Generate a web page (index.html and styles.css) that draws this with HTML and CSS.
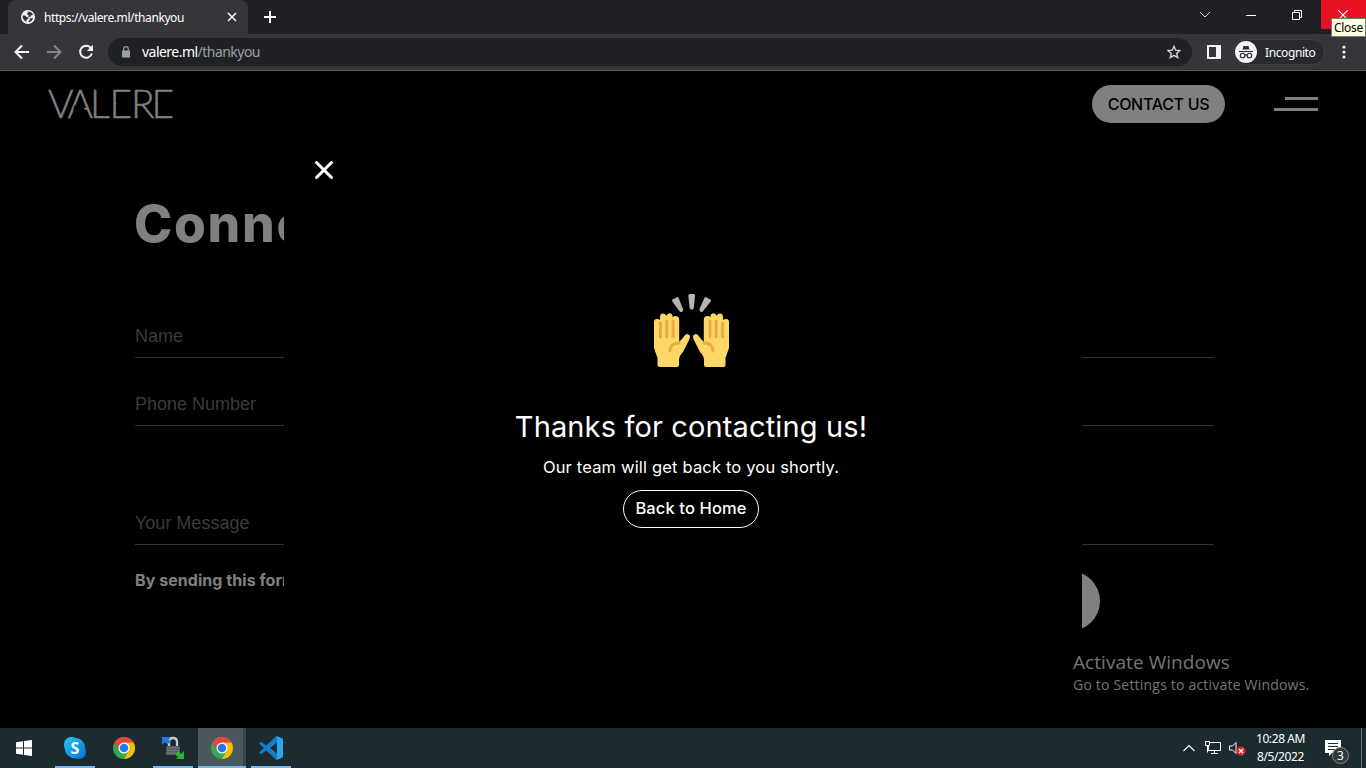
FILE: index.html
```html
<!DOCTYPE html>
<html lang="en">
<head>
<meta charset="utf-8">
<title>https://valere.ml/thankyou</title>
<link rel="stylesheet" href="styles.css">
</head>
<body>
<div class="screen">
  <header class="tabstrip">
    <div class="tab">
      <svg class="globe" width="14" height="14" viewBox="0 0 14 14"><circle cx="7" cy="7" r="7" fill="#f1f3f4"/><path d="M1.500 5.500h2.700l1.300 1.400h1.700v1.600L5.500 10v1.800C3.200 11.200 1.300 8.700 1.500 5.500zM7.200 1.500c2 0 4 1.200 4.900 3.200L10 5.400l-.9 1.800-1.800-.4.300-1.500-1.700-1zM8.300 8.400l3.800-.4c-.5 2.400-2 3.800-4.300 4.300v-1.800l1.500-.9z" fill="#35363a"/></svg>
      <span class="tab-title">https://valere.ml/thankyou</span>
      <svg width="10" height="10" viewBox="0 0 10 10"><path d="M1 1l8 8M9 1l-8 8" stroke="#f1f3f4" stroke-width="1.7"/></svg>
    </div>
    <svg class="newtab" width="12" height="12" viewBox="0 0 12 12"><path d="M6 0v12M0 6h12" stroke="#fff" stroke-width="2"/></svg>
    <div class="window-controls">
      <span class="ctl"><svg width="12" height="8" viewBox="0 0 12 8"><path d="M1 1l5 5 5-5" fill="none" stroke="#dcdcdc"/></svg></span>
      <span class="ctl"><svg width="10" height="10" viewBox="0 0 10 10"><path d="M0 5.500h10" stroke="#fff"/></svg></span>
      <span class="ctl"><svg width="10" height="10" viewBox="0 0 10 10"><path d="M.5 2.500h7v7h-7zM2.500 2.500v-2h7v7h-2" fill="none" stroke="#fff"/></svg></span>
      <span class="ctl close"><svg width="10" height="10" viewBox="0 0 10 10"><path d="M0 0l10 10M10 0L0 10" stroke="#fff" stroke-width="1.100"/></svg><span class="tooltip">Close</span></span>
    </div>
  </header>

  <div class="toolbar">
    <svg class="nav" width="16" height="16" viewBox="0 0 16 16"><path d="M15 8H2M8 1.500L1.500 8 8 14.500" fill="none" stroke="#f1f3f4" stroke-width="2"/></svg>
    <svg class="nav" width="16" height="16" viewBox="0 0 16 16"><path d="M1 8h13M8 1.500L14.500 8 8 14.500" fill="none" stroke="#85878a" stroke-width="2"/></svg>
    <svg class="nav" width="16" height="16" viewBox="0 0 16 16"><path d="M13 4.200A6 6 0 1 0 13.900 9.500" fill="none" stroke="#f1f3f4" stroke-width="2"/><path d="M15 .8v6.200H8.800z" fill="#f1f3f4"/></svg>
    <div class="omnibox">
      <svg width="10" height="12" viewBox="0 0 10 12"><path d="M1 4.500h8v7H1z" fill="#9aa0a6"/><path d="M2.700 5V3a2.300 2.300 0 0 1 4.600 0v2" fill="none" stroke="#9aa0a6" stroke-width="1.200"/></svg>
      <span class="url">valere.ml<span class="path">/thankyou</span></span>
      <svg class="star" width="14" height="14" viewBox="0 0 14 14"><path d="M7 1.300l1.700 3.900 4.200.4-3.200 2.800 1 4.200L7 10.400l-3.700 2.200 1-4.200L1.100 5.600l4.200-.4z" fill="none" stroke="#d0d2d5" stroke-width="1.400"/></svg>
    </div>
    <svg class="panel" width="14" height="14" viewBox="0 0 14 14"><path d="M0 0h14v14H0zM2 2v10h7V2z" fill="#f1f3f4" fill-rule="evenodd"/></svg>
    <div class="profile">
      <svg width="22" height="22" viewBox="0 0 22 22"><circle cx="11" cy="11" r="11" fill="#f1f3f4"/><path d="M7.500 8.500L8.600 4.700l2.400.6 2.400-.6 1.100 3.800zM4 10h14v1H4z" fill="#292a2d"/><g fill="none" stroke="#292a2d" stroke-width="1.100"><circle cx="7.600" cy="14.500" r="2.300"/><circle cx="14.400" cy="14.500" r="2.300"/><path d="M9.900 14.300q1.100-.8 2.200 0"/></g></svg>
      <span class="profile-name">Incognito</span>
    </div>
    <svg class="dots" width="4" height="14" viewBox="0 0 4 14"><g fill="#f1f3f4"><circle cx="2" cy="2" r="1.600"/><circle cx="2" cy="7" r="1.600"/><circle cx="2" cy="12" r="1.600"/></g></svg>
  </div>

  <main class="page">
    <div class="site-header">
      <svg class="logo" width="134" height="40" viewBox="0 0 134 40" role="img" aria-label="VALERE">
        <text class="logo-text" y="30" x="0 19.500 42 61.500 83 103.500">VALERE</text>
        <path d="M26.500 17.500h9.300l.7 4.400H25.200zM68.200 13h14.500v5H68.200zM110.200 13h14.500v5h-14.500z" fill="#000"/>
      </svg>
      <div class="header-actions">
        <a class="contact">CONTACT US</a>
        <span class="menu"><span class="bar short"></span><span class="bar"></span></span>
      </div>
    </div>
    <form class="form">
      <h1 class="title">Connect</h1>
      <div class="field name">Name</div>
      <div class="field phone">Phone Number</div>
      <div class="field message">Your Message</div>
      <div class="consent">By sending this form</div>
      <div class="send"></div>
    </form>
    <section class="modal">
      <svg class="modal-close" width="20" height="20" viewBox="0 0 20 20"><path d="M2.500 2.500l15 15M17.500 2.500l-15 15" stroke="#fff" stroke-width="3" stroke-linecap="round"/></svg>
      <svg class="hands" width="78" height="76" viewBox="0 0 78 76">
        <g fill="#b1b4b5"><path d="M19.500 5.500l4.500-2.300q1-.4 1.500.5l4.700 11.500q.4 2-1.400 2.700-1.600.6-2.500-.8l-7-9.700q-.7-1.200.2-1.900zM35.300 1.500q0-1.500 1.500-1.500h4q1.400 0 1.300 1.500L40.800 14q-.3 1.500-2 1.500T36.600 14zM57.500 5.500L53 3.200q-1-.4-1.500.5L46.500 15q-.5 2 1.200 2.800 1.500.7 2.500-.7l7.500-9.700q.7-1.200-.2-1.900z"/></g>
        <g id="hand"><path d="M1 28q0-3 2.700-3t3.300 1v-3.500q.3-3 3-3 2.300 0 3.300 2.300Q14.500 19.300 16.500 19.300q3 0 3.200 4 .8-1.300 2.800-1.300 3.500 0 3.700 3.700V48l4-4.500q3-4.700 5.300-3 2.500 1.200.8 5L30 58q-4 4-4 8V71q0 2-2 2H6.500q-2 0-2-2v-7L1 54z" fill="#ffd767"/><path d="M7.400 29v14M13.800 27v16M20 27v16" stroke="#e6aa47" stroke-width="3" stroke-linecap="round"/><path d="M17 57q0-8 9-8" stroke="#e6aa47" stroke-width="3" fill="none" stroke-linecap="round"/></g>
        <use href="#hand" transform="translate(77 0) scale(-1 1)"/>
      </svg>
      <h2 class="thanks">Thanks for contacting us!</h2>
      <p class="note">Our team will get back to you shortly.</p>
      <a class="home">Back to Home</a>
    </section>
    <aside class="watermark"><div class="activate">Activate Windows</div><div class="settings">Go to Settings to activate Windows.</div></aside>
  </main>

  <footer class="taskbar">
    <span class="task start"><svg width="16" height="16" viewBox="0 0 16 16"><path d="M0 2.300l7-1v6.200H0zM8 1.100L16 0v7.500H8zM0 8.500h7v6.200l-7-1zM8 8.500h8V16l-8-1.100z" fill="#fff"/></svg></span>
    <span class="task running skype"><svg width="22" height="22" viewBox="0 0 22 22"><defs><linearGradient id="sk" x2="1" y2="1"><stop stop-color="#25c1f2"/><stop offset="1" stop-color="#0878d4"/></linearGradient></defs><rect width="15" height="15" rx="7" fill="#28b5ea"/><rect x="8" y="8" width="14" height="14" rx="6.500" fill="#0878d4"/><circle cx="11" cy="11" r="10.300" fill="url(#sk)"/><text class="skype-s" x="11" y="16.500">S</text></svg></span>
    <span class="task chrome"><svg width="22" height="22" viewBox="0 0 22 22"><g id="chrome"><circle cx="11" cy="11" r="11" fill="#34a853"/><path d="M11 11L1.500 5.500A11 11 0 0 1 20.500 5.500z" fill="#ea4335"/><path d="M11 5.500h9.500A11 11 0 0 1 11 22l4.800-8.200z" fill="#fbbc05"/><path d="M1.500 5.500l4.800 8.300L11 5.500z" fill="#ea4335"/><circle cx="11" cy="11" r="5.500" fill="#fff"/><circle cx="11" cy="11" r="4.300" fill="#2679e8"/></g></svg></span>
    <span class="task running scp"><svg width="24" height="24" viewBox="0 0 24 24"><path d="M8 11V6q0-4 4-4t4 4v5" fill="none" stroke="#c8cacc" stroke-width="2.300"/><rect x="5" y="10" width="14" height="9" rx="1" fill="#555a5e"/><path d="M6 12h12M6 14.500h12M6 17h12" stroke="#85898c" stroke-width=".7"/><path d="M1 1h8L7.500 3 9.500 5.500 6.500 8.500 4 6 1 9z" fill="#2377e8"/><path d="M23 23h-8l2-2-3-3 3-3 3 3 3-3z" fill="#23b532"/></svg></span>
    <span class="task running active"><svg width="22" height="22" viewBox="0 0 22 22"><use href="#chrome"/></svg></span>
    <span class="task running code"><svg width="24" height="24" viewBox="0 0 24 24"><path d="M17.500 0L24 3v18l-6.500 3L7 14.500 2.500 18 0 16.500 5 12 0 7.500 2.500 6 7 9.500zM18 6.500L11 12l7 5.500z" fill="#147dc5" fill-rule="evenodd"/><path d="M17.500 0L24 3v18l-6.500 3q.5-.3.5-1.200V1.200q0-.9-.5-1.200z" fill="#2ba5ed"/></svg></span>
    <div class="tray">
      <svg class="caret" width="12" height="8" viewBox="0 0 12 8"><path d="M.5 7L6 1.500 11.500 7" fill="none" stroke="#fff" stroke-width="1.100"/></svg>
      <svg class="net" width="17" height="14" viewBox="0 0 17 14"><path d="M5 1.500h10.500v8H3.500V5M9.500 9.500v3M6 12.500h7M.5.500h4v4h-4zM2.500 4.500v7" fill="none" stroke="#fff"/></svg>
      <svg class="sound" width="17" height="16" viewBox="0 0 17 16"><path d="M.5 5h3L7 1.500v11L3.500 9h-3z" fill="none" stroke="#fff"/><circle cx="12" cy="10" r="4.500" fill="#e5252a"/><path d="M10 8l4 4M14 8l-4 4" stroke="#fff" stroke-width="1.200"/></svg>
      <div class="clock"><span class="time">10:28 AM</span><span class="date">8/5/2022</span></div>
      <svg class="notice" width="25" height="26" viewBox="0 0 25 26"><path d="M0 0h16v13H7l-3 3v-3H0z" fill="#fff"/><path d="M3 3.500h10M3 6.500h10M3 9.500h7" stroke="#1d2c31"/><circle cx="15.500" cy="15.500" r="8" fill="#30383c" stroke="#858b8e"/><text class="count" x="15.500" y="20">3</text></svg>
      <span class="peek"></span>
    </div>
  </footer>
</div>
</body>
</html>
```
FILE: styles.css
```css
* { box-sizing: border-box; }
body { margin: 0; background: #000; font-family: "Noto Sans", sans-serif; }
svg { display: block; flex: none; }
h1, h2, p { margin: 0; }
.screen { width: 1366px; height: 768px; display: flex; flex-direction: column; overflow: hidden; }

.tabstrip { height: 34px; background: #202124; display: flex; flex: none; padding-left: 8px; }
.tab { width: 240px; height: 34px; background: #35363a; border-radius: 8px 8px 0 0; display: flex; align-items: center; padding: 0 11px 0 13px; color: #fff; font-size: 12px; }
.tab-title { flex: 1; margin-left: 9px; letter-spacing: -0.41px; white-space: nowrap; }
.newtab { margin: 11px 0 0 16px; }
.window-controls { display: flex; margin-left: auto; }
.ctl { width: 46px; height: 29px; display: flex; align-items: center; justify-content: center; padding-right: 2px; }
.close { background: #e81123; width: 45px; position: relative; }
.tooltip { position: absolute; right: 0; top: 18px; width: 35px; height: 19px; background: #ffffe1; border: 1px solid #767676; color: #000; font-size: 12px; line-height: 17px; text-align: center; letter-spacing: -0.3px; z-index: 5; }

.toolbar { height: 37px; background: #35363a; border-bottom: 1px solid #5b5c60; display: flex; flex: none; align-items: center; padding: 0 20px 0 14px; }
.nav { margin-right: 16px; }
.omnibox { width: 1084px; height: 28px; margin-left: -2px; border-radius: 14px; background: #202124; display: flex; align-items: center; padding: 0 11px 0 13px; }
.url { flex: 1; margin: -2px 0 0 11px; font-size: 14px; letter-spacing: -0.53px; color: #fff; }
.path { color: #9aa0a6; }
.panel { margin-left: 15px; }
.profile { display: flex; align-items: center; gap: 8px; width: 92px; height: 26px; margin-left: 12px; padding-left: 1px; border-radius: 13px; background: #292a2d; border: 1px solid #3f4044; color: #fff; font-size: 12px; }
.profile-name { letter-spacing: -0.4px; }
.dots { margin-left: auto; }

.page { height: 657px; position: relative; flex: none; overflow: hidden; background: #000; font-family: Inter, sans-serif; }
.site-header { display: flex; justify-content: space-between; padding: 14px 48px 0 48px; height: 66px; }
.logo { margin-top: 3px; }
.logo-text { font: 300 39px Lato, sans-serif; fill: #808080; stroke: #808080; stroke-width: 0.4px; }
.header-actions { display: flex; gap: 50px; }
.contact { width: 133px; height: 38px; border-radius: 19px; background: #808080; color: #000; font-size: 16px; font-weight: 500; line-height: 38px; text-align: center; letter-spacing: -0.3px; }
.menu { display: flex; flex-direction: column; align-items: flex-end; gap: 8px; padding-top: 12px; width: 43px; }
.bar { width: 44px; flex: none; height: 3px; background: #808080; }
.short { width: 33px; }
.form { width: 1079px; margin-left: 135px; }
.title { margin-top: 56px; height: 60px; line-height: 60px; font-size: 51.5px; font-weight: 800; color: #808080; letter-spacing: 1.7px; margin-left: -1px; }
.field { border-bottom: 1px solid #333; color: #3b3b3b; font: 18px/22px "Liberation Sans", sans-serif; }
.name { margin-top: 72px; height: 33px; }
.phone { margin-top: 35px; height: 33px; }
.message { margin-top: 86px; height: 33px; }
.consent { margin-top: 25px; height: 20px; font-size: 16px; line-height: 20px; font-weight: 700; color: #808080; white-space: nowrap; letter-spacing: 0.05px; }
.send { width: 165px; height: 60px; border-radius: 30px; background: #808080; margin: -19px 0 0 800px; }

.modal { position: absolute; left: 284px; top: 60px; width: 798px; height: 540px; background: #000; display: flex; flex-direction: column; align-items: center; color: #fff; padding: 29px 0 0 16px; }
.modal-close { align-self: flex-start; margin-left: 14px; }
.hands { margin: 114px 0 0 2px; }
.thanks { margin-top: 37px; height: 40px; line-height: 40px; font-size: 29px; font-weight: 400; letter-spacing: 0.14px; white-space: nowrap; }
.note { margin-top: 8px; height: 24px; line-height: 24px; font-size: 16.5px; letter-spacing: 0.17px; white-space: nowrap; }
.home { margin-top: 11px; width: 136px; height: 38px; border: 1px solid #fff; border-radius: 19px; line-height: 35px; text-align: center; font-size: 16.5px; font-weight: 500; letter-spacing: 0.12px; white-space: nowrap; }
.watermark { position: absolute; left: 1073px; top: 578px; color: #767676; font-family: "Open Sans", sans-serif; white-space: nowrap; }
.activate { font-size: 19px; line-height: 26px; letter-spacing: 0.06px; }
.settings { font-size: 14px; line-height: 20px; letter-spacing: 0.2px; }

.taskbar { height: 40px; background: #1c2b30; display: flex; flex: none; }
.task { display: flex; align-items: center; justify-content: center; height: 40px; flex: none; }
.start { width: 48px; }
.running { border-bottom: 2px solid #76b9ed; padding-top: 2px; }
.skype { width: 40px; margin-left: 7px; }
.skype-s { font: 700 16px "Noto Sans", sans-serif; fill: #fff; text-anchor: middle; }
.chrome { width: 48px; margin-left: 5px; }
.scp { width: 40px; margin-left: 5px; }
.active { width: 48px; margin-left: 5px; background: #4b595d; box-shadow: inset -3px 0 0 #38464a; }
.code { width: 40px; margin-left: 5px; }
.tray { display: flex; margin-left: auto; align-items: flex-start; }
.caret { margin: 16px 10px 0 0; }
.net { margin: 13px 7px 0 0; }
.sound { margin: 13px 9px 0 0; }
.clock { width: 51px; display: flex; flex-direction: column; align-items: center; color: #fff; font-size: 12px; line-height: 18px; padding-top: 2px; letter-spacing: -0.4px; white-space: nowrap; }
.notice { margin: 12px 0 0 19px; }
.count { font: 12px "Noto Sans", sans-serif; fill: #fff; text-anchor: middle; }
.peek { width: 5px; height: 40px; margin-left: 11px; border-left: 1px solid #6e787b; }
```
